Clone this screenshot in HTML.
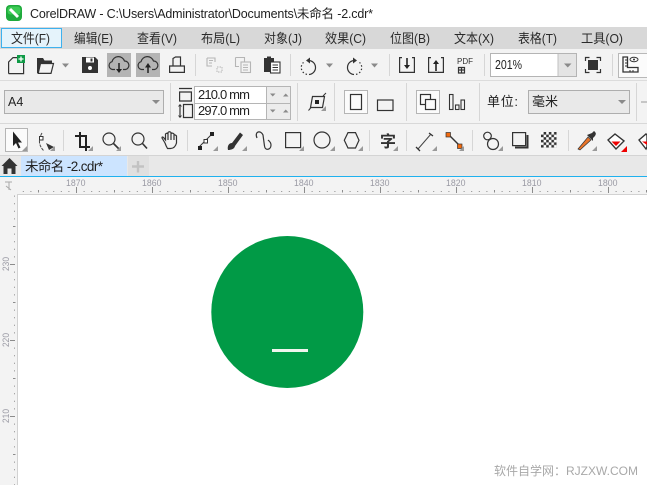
<!DOCTYPE html>
<html><head><meta charset="utf-8">
<style>
html,body{margin:0;padding:0;background:#fff;width:647px;height:485px;overflow:hidden}
svg{display:block}
text{font-family:"Liberation Sans","Noto Sans CJK SC",sans-serif;fill:#222}
.m{font-size:13px;fill:#2a2a2a}
.r{font-size:9px;fill:#9a9aa4}
.i{fill:none;stroke:#333;stroke-width:1.2}
.f{fill:#333;stroke:none}
.g{fill:none;stroke:#b5b5b5;stroke-width:1.1}
.s{fill:#d6d6d6}
.c{fill:#8a8a8a}
.t{fill:#9a9a9a}
</style></head><body>
<svg width="647" height="485" viewBox="0 0 647 485" xmlns="http://www.w3.org/2000/svg">
<defs>
<pattern id="hr" x="0" y="177" width="76" height="17" patternUnits="userSpaceOnUse">
<path d="M0 10V16M38 13V15.500M7.600 14V15M15.200 14V15M22.800 14V15M30.400 14V15M45.600 14V15M53.200 14V15M60.800 14V15M68.400 14V15" stroke="#8c8c8c" stroke-width="1" transform="translate(.5 0)"/>
</pattern>
<pattern id="vr" x="0" y="188" width="18" height="76" patternUnits="userSpaceOnUse">
<path d="M10 0H15M13 38H15.500M14 7.600H15M14 15.200H15M14 22.800H15M14 30.400H15M14 45.600H15M14 53.200H15M14 60.800H15M14 68.400H15" stroke="#8c8c8c" stroke-width="1" transform="translate(0 .5)"/>
</pattern>
<pattern id="chk" x="541" y="132" width="5.200" height="5.200" patternUnits="userSpaceOnUse">
<rect width="5.200" height="5.200" fill="#333"/><rect width="2.600" height="2.600" fill="#fff"/><rect x="2.600" y="2.600" width="2.600" height="2.600" fill="#fff"/>
</pattern>
</defs>

<!-- title bar -->
<rect width="647" height="27" fill="#fff"/>
<rect x="6" y="5" width="16" height="16" rx="4" fill="#1faa3c"/>
<rect x="7.500" y="6.500" width="13" height="8" rx="3" fill="#3ccb55"/>
<path d="M10 9L18 17" stroke="#fff" stroke-width="3"/>
<text x="30" y="18" font-size="12.500" textLength="343" lengthAdjust="spacing">CorelDRAW - C:\Users\Administrator\Documents\未命名 -2.cdr*</text>

<!-- menu -->
<rect y="27" width="647" height="22" fill="#d8d8d8"/>
<rect x="1.500" y="28.500" width="60" height="19" fill="#e5f3fb" stroke="#3eb1ee"/>
<text class="m" x="11" y="43" textLength="39" lengthAdjust="spacingAndGlyphs">文件(F)</text>
<text class="m" x="74" y="43" textLength="39" lengthAdjust="spacingAndGlyphs">编辑(E)</text>
<text class="m" x="137" y="43" textLength="40" lengthAdjust="spacingAndGlyphs">查看(V)</text>
<text class="m" x="201" y="43" textLength="39" lengthAdjust="spacingAndGlyphs">布局(L)</text>
<text class="m" x="264" y="43" textLength="38" lengthAdjust="spacingAndGlyphs">对象(J)</text>
<text class="m" x="325" y="43" textLength="41" lengthAdjust="spacingAndGlyphs">效果(C)</text>
<text class="m" x="390" y="43" textLength="40" lengthAdjust="spacingAndGlyphs">位图(B)</text>
<text class="m" x="454" y="43" textLength="40" lengthAdjust="spacingAndGlyphs">文本(X)</text>
<text class="m" x="518" y="43" textLength="39" lengthAdjust="spacingAndGlyphs">表格(T)</text>
<text class="m" x="581" y="43" textLength="42" lengthAdjust="spacingAndGlyphs">工具(O)</text>

<!-- toolbars bg -->
<rect y="49" width="647" height="106" fill="#f3f3f3"/>
<rect y="80" width="647" height="1" fill="#dcdcdc"/>
<rect y="123" width="647" height="1" fill="#d8d8d8"/>
<rect y="155" width="647" height="1" fill="#d4d4d4"/>

<!-- toolbar 1 -->
<path class="i" d="M8.600 73.600V62L13 57.600H18.500M23.600 63V73.600H8.600"/>
<rect x="17" y="55" width="8" height="8" fill="#0e9a45"/>
<path d="M21 56.500V61.500M18.500 59H23.500" stroke="#fff" stroke-width="1.300"/>
<path class="f" d="M37 58h6l1.500 2.500H52v2.500H40.500L38.500 73H37z"/>
<path class="i" d="M40.500 63.500H53.500L51 73.400H38.200Z"/>
<path class="c" d="M62 63.500h7l-3.500 4z"/>
<path class="f" d="M82 57h13l3 3v13H82z"/>
<rect x="86" y="57.500" width="8" height="5" fill="#fff"/><rect x="90.500" y="58.500" width="2" height="3" fill="#333"/>
<circle cx="90" cy="68" r="2" fill="#fff"/>
<rect x="107" y="53" width="24" height="24" fill="#b4b4b4"/>
<rect x="136" y="53" width="24" height="24" fill="#b4b4b4"/>
<path class="i" d="M115 69.500h-2.500a4 4 0 0 1-.5-7.800a6.500 6.500 0 0 1 12.500-.7a4.300 4.300 0 0 1 1 8.500H123" stroke-width="1.100"/>
<path d="M119 63V70" stroke="#222" stroke-width="1.500" fill="none"/><path d="M116 69h6l-3 4z" fill="#222"/>
<path class="i" d="M144 69.500h-2.500a4 4 0 0 1-.5-7.800a6.500 6.500 0 0 1 12.500-.7a4.300 4.300 0 0 1 1 8.500H152" stroke-width="1.100"/>
<path d="M148 67V73" stroke="#222" stroke-width="1.500" fill="none"/><path d="M145 67.500h6l-3-4.500z" fill="#222"/>
<path class="i" d="M173 66V58.500L175.500 57H180.500V66M169.600 66H184.400V72.400H169.600Z"/>
<rect class="s" x="195" y="54" width="1" height="22"/>
<path class="g" d="M207 58h8v4M207 58v8h5M209 60.500h4M209 63h3"/>
<path d="M217 67h5v5h-5z" fill="none" stroke="#b5b5b5" stroke-width="1" stroke-dasharray="1.500 1"/>
<path class="g" d="M235.500 57.500h9v4M235.500 57.500v9h3.500"/><rect class="g" x="241" y="62" width="9.500" height="10.500"/><path class="g" d="M243 65h5M243 67.500h5M243 70h5"/>
<path class="f" d="M264 58h3v-1.500h4V58h3v14h-10z"/>
<rect x="270.500" y="62" width="9.500" height="11" fill="#fff" stroke="#333" stroke-width="1.100"/><path d="M272.500 65h5.500M272.500 67.500h5.500M272.500 70h5.500" stroke="#333"/>
<rect class="s" x="290" y="54" width="1" height="22"/>
<path class="i" d="M308 60.500a7 7 0 0 1 1 14"/>
<path class="i" d="M307 74.400a7 7 0 0 1-3.500-12" stroke-dasharray="1.500 2"/>
<path class="f" d="M310 57.500v6l-4-3z"/>
<path class="c" d="M326 63.500h7l-3.500 4z"/>
<path class="i" d="M355 60.500a7 7 0 0 0-1 14"/>
<path class="i" d="M356 74.400a7 7 0 0 0 3.500-12" stroke-dasharray="1.500 2"/>
<path class="f" d="M353 57.500v6l4-3z"/>
<path class="c" d="M371 63.500h7l-3.500 4z"/>
<rect class="s" x="389" y="54" width="1" height="22"/>
<path class="i" d="M402 57.600H399.600V72.400H414.400V57.600H412"/><path d="M407 58V66" stroke="#222" stroke-width="1.600"/><path d="M404 65h6l-3 4z" fill="#222"/>
<path class="i" d="M431 57.600H428.600V72.400H443.400V57.600H441"/><path d="M436 63V71" stroke="#222" stroke-width="1.600"/><path d="M433 64h6l-3-4z" fill="#222"/>
<text x="457" y="64" font-size="8" textLength="16" lengthAdjust="spacingAndGlyphs" style="fill:#333">PDF</text>
<path class="i" d="M458.500 67.500h6v5.500h-6zM461.500 67.500V73M458.500 70h6" stroke-width="1"/>
<rect class="s" x="484" y="54" width="1" height="22"/>
<rect x="490.500" y="53.500" width="86" height="23" fill="#fff" stroke="#b4b4b4"/>
<rect x="558" y="54" width="18" height="22" fill="#e4e4e4"/><rect x="557.500" y="54" width="1" height="22" fill="#c0c0c0"/>
<path class="c" d="M564 63.500h7.500l-3.750 4z"/>
<text x="495" y="69" font-size="13" textLength="27" lengthAdjust="spacingAndGlyphs">201%</text>
<path class="i" d="M585.500 61V57.500H589.500M596.500 57.500H600.500V61M600.500 69V72.500H596.500M589.500 72.500H585.500V69"/>
<rect x="588" y="60" width="10" height="10" fill="#333"/>
<rect class="s" x="612" y="54" width="1" height="22"/>
<rect x="618.500" y="53.500" width="30" height="24" fill="#fbfbfb" stroke="#b8b8b8"/>
<path d="M623 57V72H638V67.500H627.500V57Z" fill="none" stroke="#333" stroke-width="1.300"/>
<path d="M625 60h2M625 63h2M625 66h2M630 70v2M633 70v2" stroke="#333"/>
<ellipse cx="634" cy="59.500" rx="4" ry="2.200" fill="none" stroke="#333"/><circle cx="634" cy="59.500" r="1" fill="#333"/>

<!-- toolbar 2 -->
<rect x="4.500" y="90.500" width="159" height="23" fill="#e9e9e9" stroke="#aeaeae"/>
<text x="8" y="106" font-size="12.500">A4</text>
<path class="c" d="M152 100h8l-4 4z"/>
<rect class="s" x="170" y="83" width="1" height="38"/>
<path class="i" d="M179 88.500H192M179.600 92H191.400V101H179.600Z" stroke-width="1"/>
<path class="i" d="M183.500 104.500H192.500V117.500H183.500ZM180 105V117" stroke-width="1"/>
<path d="M178.500 106.500L180 104.500L181.500 106.500M178.500 115.500L180 117.500L181.500 115.500" fill="none" stroke="#333" stroke-width=".8"/>
<rect x="194.500" y="86.500" width="96" height="33" fill="#ececec" stroke="#b5b5b5"/>
<rect x="195" y="87" width="71" height="16" fill="#fff"/><rect x="195" y="104" width="71" height="15" fill="#fff"/>
<rect x="194" y="103" width="97" height="1" fill="#b5b5b5"/>
<rect x="266" y="87" width="1" height="32" fill="#b5b5b5"/>
<text x="198" y="99" font-size="13" textLength="52" lengthAdjust="spacing">210.0 mm</text>
<text x="198" y="115" font-size="13" textLength="52" lengthAdjust="spacing">297.0 mm</text>
<path class="c" d="M270 93.500h5.500l-2.750 3zM283 96.500h5.500l-2.750-3zM270 109.500h5.500l-2.750 3zM283 112.500h5.500l-2.750-3z"/>
<rect class="s" x="297" y="83" width="1" height="38"/>
<path class="i" d="M312.500 96.500H324.500L322.500 107.500H310.500Z"/><path d="M308.500 110.500L311 107.500M323 96L326 93" stroke="#333"/>
<rect x="315" y="100" width="4" height="4" fill="#222"/>
<path class="t" d="M321 111l5-5v5z"/>
<rect class="s" x="334" y="83" width="1" height="38"/>
<rect x="344.500" y="90.500" width="23" height="23" fill="#fbfbfb" stroke="#b5b5b5"/>
<rect x="350.500" y="94.500" width="11" height="15" fill="none" stroke="#333" stroke-width="1.200"/>
<rect x="377.500" y="100" width="15.500" height="10.500" fill="none" stroke="#333" stroke-width="1.200"/>
<rect class="s" x="406" y="83" width="1" height="38"/>
<rect x="416.500" y="90.500" width="23" height="23" fill="#fbfbfb" stroke="#b5b5b5"/>
<rect x="420.500" y="94.500" width="10" height="10" fill="none" stroke="#333" stroke-width="1.200"/>
<rect x="425.500" y="99.500" width="10" height="10" fill="#fbfbfb" stroke="#333" stroke-width="1.200"/>
<rect x="449.500" y="94.500" width="3.500" height="15" fill="none" stroke="#333" stroke-width="1.100"/>
<rect x="455.500" y="105" width="3.500" height="4.500" fill="none" stroke="#333" stroke-width="1.100"/>
<rect x="461" y="100" width="3.500" height="9.500" fill="none" stroke="#333" stroke-width="1.100"/>
<rect class="s" x="479" y="83" width="1" height="38"/>
<text x="487" y="106" font-size="13" textLength="31" lengthAdjust="spacing">单位:</text>
<rect x="528.500" y="90.500" width="101" height="23" fill="#e9e9e9" stroke="#aeaeae"/>
<text x="532" y="106" font-size="13">毫米</text>
<path class="c" d="M618 100h8l-4 4z"/>
<rect class="s" x="636" y="83" width="1" height="38"/>
<path d="M641 102h6" stroke="#999"/>

<!-- toolbar 3 -->
<rect x="5.500" y="128.500" width="22" height="23" fill="#fbfbfb" stroke="#b5b5b5"/>
<path d="M13 131.500V146L16 143L18.500 148.500L20.500 147.500L18 142.500H22Z" fill="#222"/>
<path d="M42 133Q36 143 44 151" fill="none" stroke="#444" stroke-width="1" stroke-dasharray="3 1"/>
<rect x="39.500" y="136.500" width="3.500" height="3.500" fill="#fff" stroke="#333"/>
<path class="f" d="M46 143L54 147L49 150Z"/>
<rect class="s" x="63" y="130" width="1" height="21"/>
<path d="M80 133V148H90M75 137H86V152" fill="none" stroke="#222" stroke-width="2" transform="translate(0 -1)"/>
<circle cx="109" cy="139" r="6" class="i"/><path d="M113.500 143.500L119 149" stroke="#333" stroke-width="1.600"/>
<circle cx="138" cy="139" r="6" class="i"/><path d="M142.500 143.500L147 148.500" stroke="#333" stroke-width="1.600"/>
<path class="i" d="M165 143L162 138Q162 136 164 138L165.500 140V134Q167 132.500 168 134V132.500Q169.500 131 171 132.500V133.500Q172.500 132.500 174 134V135Q175.500 134.500 176.500 136V143Q175 148.500 170.500 148.500H167.500Q166 146 165 143ZM168 134V140M171 133V140M174 135V140"/>
<rect class="s" x="187" y="130" width="1" height="21"/>
<path d="M199 147L213 133" stroke="#333"/>
<rect x="198" y="146" width="4" height="4" fill="#222"/><rect x="210" y="132" width="4" height="4" fill="#222"/>
<rect x="204" y="139.500" width="3.500" height="3.500" fill="#fff" stroke="#333"/>
<path class="f" d="M228 150C227 146 229 143 232 143L240 132.500L243 135L235 146C234.500 149 231 150 228 150Z"/>
<path class="i" d="M257 138C254 131 261 130 263 135L264.500 146C265 151 271 150 271 145C271 142 269 141 268 140" stroke-width="1.400"/>
<rect x="285.600" y="132.600" width="15" height="15" class="i" stroke-width="1.200"/>
<circle cx="322" cy="140" r="8" class="i"/>
<path class="i" d="M348 132.600H355.500L359 140.300L355.500 148H348L344.300 140.300Z"/>
<rect class="s" x="369" y="130" width="1" height="21"/>
<text x="380" y="147" font-size="16" font-weight="bold" style="fill:#333">字</text>
<rect class="s" x="406" y="130" width="1" height="21"/>
<path d="M418 149L431 134" stroke="#444"/><path d="M416 147L420 151M429 133L433 136" stroke="#333" stroke-width="1.300"/>
<path d="M449 135L460 146" stroke="#333" stroke-width="1.400"/>
<rect x="446" y="132.500" width="4.500" height="4.500" fill="#f26a0e" stroke="#333" stroke-width=".7"/>
<rect x="457.500" y="144" width="4.500" height="4.500" fill="#f26a0e" stroke="#333" stroke-width=".7"/>
<rect class="s" x="472" y="130" width="1" height="21"/>
<circle cx="487.500" cy="136" r="3.800" class="i"/><circle cx="493" cy="144" r="5.500" class="i" style="fill:#f3f3f3"/>
<rect x="512.600" y="132.600" width="13" height="13" class="i" stroke-width="1.300"/>
<path d="M515 147.500H527.500V135" fill="none" stroke="#333" stroke-width="2"/>
<rect x="541" y="132" width="15.600" height="15.600" fill="url(#chk)"/>
<rect class="s" x="568" y="130" width="1" height="21"/>
<path d="M578 149L588 137L591 140L580 150Z" fill="#e8742a" stroke="#333" stroke-width=".7"/>
<path class="f" d="M587 135L592 133L594 131Q597 133 595 136L593 138L593 141Z"/>
<path d="M608 140L615 134L624 141L616 149Z" fill="#fff" stroke="#333" stroke-width="1.400"/>
<path d="M611.500 141.500H620.500L616 146Z" fill="#e00"/>
<path d="M621 152L627 146V152Z" fill="#e00"/>
<path d="M639 140L646 134L647 135V147L646 149Z" fill="#fff" stroke="#333" stroke-width="1.400"/>
<path d="M642 141.500H647V145Z" fill="#e00"/>
<!-- flyout corners -->
<path class="t" d="M22 151l5-5v5zM50 151l5-5v5zM88 151l5-5v5zM116 151l5-5v5zM213 151l5-5v5zM242 151l5-5v5zM299 151l5-5v5zM330 151l5-5v5zM358 151l5-5v5zM393 151l5-5v5zM432 151l5-5v5zM459 151l5-5v5zM498 151l5-5v5zM592 151l5-5v5z"/>

<!-- tabs -->
<rect y="156" width="647" height="20" fill="#e8e8e8"/>
<path d="M9.500 158L1.500 166H3.500V174H7.500V168.500H11.500V174H15.500V166H17.500Z" fill="#333"/>
<rect x="21" y="156" width="106" height="20" fill="#cce4ff"/>
<text x="25" y="171" font-size="13.500" textLength="78" lengthAdjust="spacing">未命名 -2.cdr*</text>
<rect x="128" y="156" width="21" height="20" fill="#e0e0e0"/>
<path d="M138 161V172.500M132 166.500H144" stroke="#c2c2c2" stroke-width="2.400"/>
<rect y="176" width="647" height="1" fill="#1fb1ee"/>

<!-- rulers -->
<rect y="177" width="647" height="308" fill="#f3f3f3"/>
<rect x="18" y="195" width="629" height="290" fill="#fff"/>
<rect x="17" y="194" width="630" height="1" fill="#d2d2d2"/>
<rect x="17" y="194" width="1" height="291" fill="#d2d2d2"/>
<rect x="18" y="177" width="629" height="17" fill="url(#hr)"/>
<rect x="0" y="195" width="17" height="290" fill="url(#vr)"/>
<path d="M5 182H12M9 182V190M6 186L11 190" stroke="#aaa" stroke-width="1" fill="none"/>
<text class="r" x="66" y="186" textLength="19.500" lengthAdjust="spacingAndGlyphs">1870</text>
<text class="r" x="142" y="186" textLength="19.500" lengthAdjust="spacingAndGlyphs">1860</text>
<text class="r" x="218" y="186" textLength="19.500" lengthAdjust="spacingAndGlyphs">1850</text>
<text class="r" x="294" y="186" textLength="19.500" lengthAdjust="spacingAndGlyphs">1840</text>
<text class="r" x="370" y="186" textLength="19.500" lengthAdjust="spacingAndGlyphs">1830</text>
<text class="r" x="446" y="186" textLength="19.500" lengthAdjust="spacingAndGlyphs">1820</text>
<text class="r" x="522" y="186" textLength="19.500" lengthAdjust="spacingAndGlyphs">1810</text>
<text class="r" x="598" y="186" textLength="19.500" lengthAdjust="spacingAndGlyphs">1800</text>
<text class="r" transform="translate(9 271) rotate(-90)" textLength="14" lengthAdjust="spacingAndGlyphs">230</text>
<text class="r" transform="translate(9 347) rotate(-90)" textLength="14" lengthAdjust="spacingAndGlyphs">220</text>
<text class="r" transform="translate(9 423) rotate(-90)" textLength="14" lengthAdjust="spacingAndGlyphs">210</text>

<!-- canvas -->
<circle cx="287.300" cy="312" r="76" fill="#019a46"/>
<rect x="272" y="349" width="36" height="3" fill="#f0f5ee"/>
<text x="494" y="475" font-size="12" style="fill:#a8a8a8">软件自学网：RJZXW.COM</text>
</svg>
</body></html>
